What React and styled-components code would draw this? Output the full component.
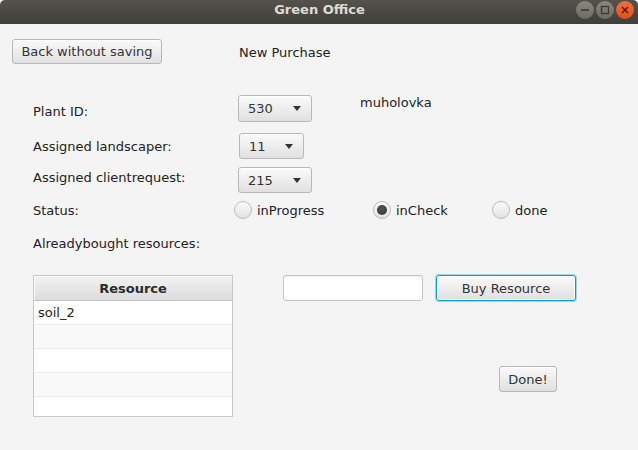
import React from "react";
import styled, { createGlobalStyle, css } from "styled-components";

const Global = createGlobalStyle`
  html, body { margin: 0; padding: 0; background: #f4f4f4; }
  body { width: 638px; height: 450px; overflow: hidden; font-family: "DejaVu Sans", sans-serif; font-size: 13px; color: #333; }
  * { box-sizing: border-box; }
`;

const Window = styled.div`
  width: 638px;
  height: 450px;
  display: flex;
  flex-direction: column;
  background: #f4f4f4;
`;

const TitleBar = styled.div`
  height: 24px;
  flex: none;
  display: flex;
  align-items: center;
  justify-content: center;
  position: relative;
  background: linear-gradient(#55524c, #3f3e3a);
  border-radius: 5px 5px 0 0;
`;

const Title = styled.div`
  font-family: "DejaVu Sans", sans-serif;
  font-weight: bold;
  font-size: 13px;
  color: #dfdbd2;
  margin-top: -5px;
  margin-left: 1px;
`;

const WinControls = styled.div`
  position: absolute;
  right: 4px;
  top: 1px;
  display: flex;
  gap: 2px;
`;

const WinBtn = styled.div`
  width: 18px;
  height: 18px;
  border-radius: 50%;
  display: flex;
  align-items: center;
  justify-content: center;
  background: ${(p) => (p.$close ? "linear-gradient(#f0703f, #e0501c)" : "linear-gradient(#8a8780, #6f6c66)")};
  color: ${(p) => (p.$close ? "#5a1c08" : "#3b3a37")};
`;

const Content = styled.div`
  flex: 1;
  display: flex;
  flex-direction: column;
`;

const HeaderRow = styled.div`
  display: flex;
  align-items: center;
  margin-top: 15px;
  padding-left: 12px;
  height: 24px;
`;

const Heading = styled.div`
  margin-left: 77px;
  color: #222;
  padding-top: 2px;
`;

const buttonBase = css`
  font-family: "DejaVu Sans", sans-serif;
  font-size: 13px;
  color: #333;
  background: linear-gradient(#fafafa, #e0e0e0);
  border: 1px solid #b8b8b8;
  border-radius: 3px;
  box-shadow: inset 0 1px 0 #ffffff;
  padding: 0;
  display: flex;
  align-items: center;
  justify-content: center;
`;

const Button = styled.button`
  ${buttonBase}
  width: ${(p) => p.$w}px;
  height: ${(p) => p.$h || 25}px;
  ${(p) =>
    p.$focused &&
    css`
      border: 1px solid #039ed3;
      box-shadow: 0 0 0 1px rgba(3, 158, 211, 0.35), inset 0 0 0 1px #ffffff;
    `}
`;

const Form = styled.div`
  display: flex;
  flex-direction: column;
  padding-left: 33px;
`;

const Row = styled.div`
  display: flex;
  align-items: center;
  height: ${(p) => p.$h}px;
  margin-top: ${(p) => p.$mt}px;
`;

const Label = styled.div`
  width: 205px;
  flex: none;
  margin-top: ${(p) => p.$shift || 0}px;
  color: #222;
`;

const Combo = styled.div`
  ${buttonBase}
  justify-content: space-between;
  width: ${(p) => p.$w}px;
  height: ${(p) => p.$h}px;
  margin-left: ${(p) => p.$ml || 0}px;
  padding: 0 10px 0 9px;
  flex: none;
`;

const Arrow = styled.span`
  width: 0;
  height: 0;
  border-left: 4.5px solid transparent;
  border-right: 4.5px solid transparent;
  border-top: 5px solid #333;
`;

const Side = styled.div`
  margin-left: 48px;
  align-self: flex-start;
  color: #222;
`;

const RadioGroup = styled.div`
  display: flex;
  align-items: center;
  margin-left: -4px;
`;

const RadioItem = styled.label`
  display: flex;
  align-items: center;
  width: ${(p) => p.$w}px;
  gap: 5px;
  color: #222;
`;

const RadioCircle = styled.span`
  width: 18px;
  height: 18px;
  border-radius: 50%;
  border: 1px solid #bcbcbc;
  background: linear-gradient(#fafafa, #e2e2e2);
  display: flex;
  align-items: center;
  justify-content: center;
  flex: none;
  &::after {
    content: "";
    display: ${(p) => (p.$on ? "block" : "none")};
    width: 10px;
    height: 10px;
    border-radius: 50%;
    background: radial-gradient(circle at 50% 40%, #555 0%, #3c3c3c 70%, #5a5a5a 100%);
  }
`;

const Bottom = styled.div`
  display: flex;
  align-items: flex-start;
  margin-top: 24px;
  padding-left: 33px;
`;

const Table = styled.div`
  width: 200px;
  height: 142px;
  border: 1px solid #c8c8c8;
  background: #fff;
  display: flex;
  flex-direction: column;
  overflow: hidden;
`;

const TableHeader = styled.div`
  height: 25px;
  flex: none;
  display: flex;
  align-items: center;
  justify-content: center;
  font-weight: bold;
  color: #2b2b2b;
  background: linear-gradient(#f2f2f2, #dcdcdc);
  border-bottom: 1px solid #c4c4c4;
  box-shadow: inset 1px 1px 0 #fafafa;
`;

const TableRow = styled.div`
  height: 24px;
  flex: none;
  display: flex;
  align-items: center;
  padding-left: 4px;
  background: ${(p) => (p.$odd ? "#f9f9f9" : "#ffffff")};
  border-bottom: 1px solid #ececec;
  color: #222;
`;

const RightCol = styled.div`
  display: flex;
  flex-direction: column;
  margin-left: 50px;
`;

const InputRow = styled.div`
  display: flex;
  align-items: center;
  gap: 13px;
`;

const TextField = styled.div`
  width: 140px;
  height: 26px;
  border: 1px solid #c4c4c4;
  border-radius: 3px;
  background: #fff;
  box-shadow: inset 0 1px 1px #eeeeee;
`;

const DoneWrap = styled.div`
  margin-top: 65px;
  margin-left: 216px;
`;

export default function App() {
  return (
    <>
      <Global />
      <Window>
        <TitleBar>
          <Title>Green Office</Title>
          <WinControls>
            <WinBtn>
              <svg width="10" height="10" viewBox="0 0 10 10">
                <rect x="1" y="4.2" width="8" height="1.6" fill="currentColor" />
              </svg>
            </WinBtn>
            <WinBtn>
              <svg width="10" height="10" viewBox="0 0 10 10">
                <rect x="1.5" y="1.5" width="7" height="7" fill="none" stroke="currentColor" strokeWidth="1.3" />
              </svg>
            </WinBtn>
            <WinBtn $close>
              <svg width="10" height="10" viewBox="0 0 10 10">
                <path d="M2 2 L8 8 M8 2 L2 8" stroke="currentColor" strokeWidth="1.5" />
              </svg>
            </WinBtn>
          </WinControls>
        </TitleBar>
        <Content>
          <HeaderRow>
            <Button $w={150} $h={25}>Back without saving</Button>
            <Heading>New Purchase</Heading>
          </HeaderRow>
          <Form>
            <Row $h={27} $mt={32}>
              <Label $shift={6}>Plant ID:</Label>
              <Combo $w={74} $h={27}>
                <span>530</span>
                <Arrow />
              </Combo>
              <Side>muholovka</Side>
            </Row>
            <Row $h={26} $mt={11}>
              <Label $shift={0}>Assigned landscaper:</Label>
              <Combo $w={65} $h={26} $ml={1}>
                <span>11</span>
                <Arrow />
              </Combo>
            </Row>
            <Row $h={26} $mt={8}>
              <Label $shift={-6}>Assigned clientrequest:</Label>
              <Combo $w={74} $h={26}>
                <span>215</span>
                <Arrow />
              </Combo>
            </Row>
            <Row $h={20} $mt={7}>
              <Label>Status:</Label>
              <RadioGroup>
                <RadioItem $w={139}>
                  <RadioCircle />
                  inProgress
                </RadioItem>
                <RadioItem $w={119}>
                  <RadioCircle $on />
                  inCheck
                </RadioItem>
                <RadioItem $w={80}>
                  <RadioCircle />
                  done
                </RadioItem>
              </RadioGroup>
            </Row>
            <Row $h={16} $mt={15}>
              <Label>Alreadybought resources:</Label>
            </Row>
          </Form>
          <Bottom>
            <Table>
              <TableHeader>Resource</TableHeader>
              <TableRow>soil_2</TableRow>
              <TableRow $odd />
              <TableRow />
              <TableRow $odd />
              <TableRow />
            </Table>
            <RightCol>
              <InputRow>
                <TextField />
                <Button $w={140} $h={26} $focused>Buy Resource</Button>
              </InputRow>
              <DoneWrap>
                <Button $w={58} $h={26}>Done!</Button>
              </DoneWrap>
            </RightCol>
          </Bottom>
        </Content>
      </Window>
    </>
  );
}
